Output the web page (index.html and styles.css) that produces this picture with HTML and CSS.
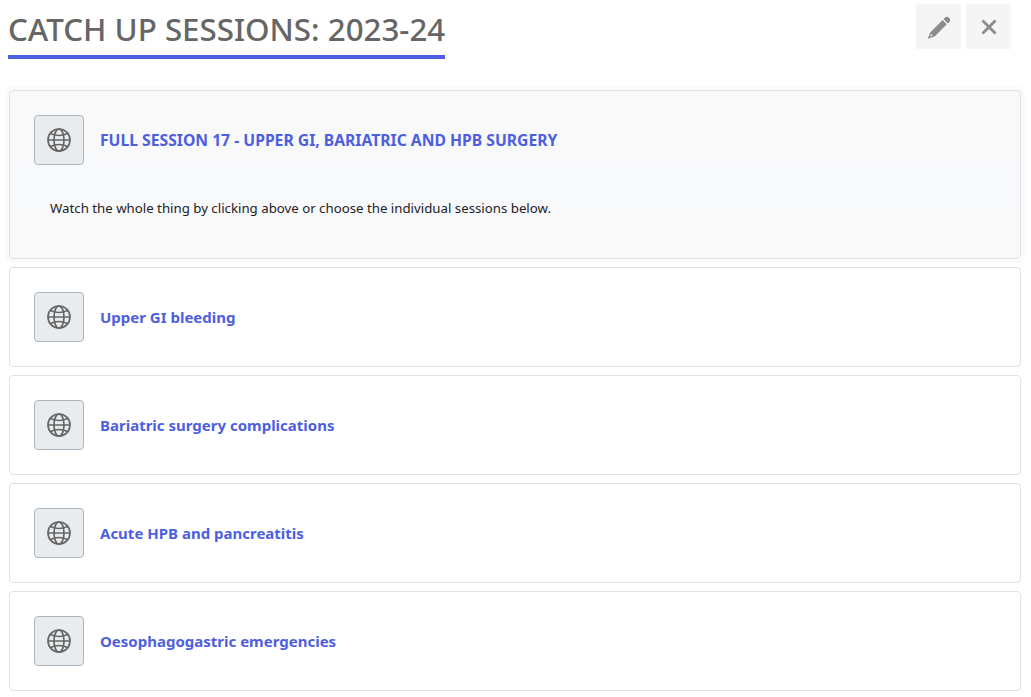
FILE: index.html
```html
<!DOCTYPE html>
<html>
<head>
    <title>Catch Up Sessions</title>
    <link rel="stylesheet" href="styles.css">
</head>
<body>
    <div class="header">
        <h2 class="page-title">CATCH UP SESSIONS: 2023-24</h2>
        <div class="actions">
            <button class="action-btn" type="button" aria-label="Edit">
                <svg width="24" height="24" viewBox="0 0 24 24"><path d="M16.600 4L17.800 2.800a3 3 0 0 1 4.200 0l.2.2a3 3 0 0 1 0 4.200L20.800 8.400zM15.600 5L19.800 9.200 7.600 21.400 1.500 23.400Q.8 23.500 1 22.800L3.200 17.400z" fill="#8c8c8c"/><path d="M3.900 18.600L6 20.700 2.900 21.800z" fill="#d8d8d8"/></svg>
            </button>
            <button class="action-btn" type="button" aria-label="Close">
                <svg width="16" height="16" viewBox="0 0 16 16"><path d="M1.500 1.500l13 13M14.500 1.500l-13 13" stroke="#8c8c8c" stroke-width="2.800" fill="none"/></svg>
            </button>
        </div>
    </div>

    <div class="list">
        <div class="card card-full">
            <div class="card-row">
                <div class="icon-box">
                    <svg width="24" height="24" viewBox="0 0 24 24" fill="none" stroke="#666" stroke-width="1.700"><circle cx="12" cy="12" r="11"/><ellipse cx="12" cy="12" rx="5" ry="11"/><path d="M3.500 5.500Q12 9.500 20.500 5.500M3.500 18.500Q12 14.500 20.500 18.500M1 12h22"/></svg>
                </div>
                <a class="card-link card-link-caps" href="#">FULL SESSION 17 - UPPER GI, BARIATRIC AND HPB SURGERY</a>
            </div>
            <p class="card-text">Watch the whole thing by clicking above or choose the individual sessions below.</p>
        </div>
        <div class="card">
            <div class="card-row">
                <div class="icon-box">
                    <svg width="24" height="24" viewBox="0 0 24 24" fill="none" stroke="#666" stroke-width="1.700"><circle cx="12" cy="12" r="11"/><ellipse cx="12" cy="12" rx="5" ry="11"/><path d="M3.500 5.500Q12 9.500 20.500 5.500M3.500 18.500Q12 14.500 20.500 18.500M1 12h22"/></svg>
                </div>
                <a class="card-link" href="#">Upper GI bleeding</a>
            </div>
        </div>
        <div class="card">
            <div class="card-row">
                <div class="icon-box">
                    <svg width="24" height="24" viewBox="0 0 24 24" fill="none" stroke="#666" stroke-width="1.700"><circle cx="12" cy="12" r="11"/><ellipse cx="12" cy="12" rx="5" ry="11"/><path d="M3.500 5.500Q12 9.500 20.500 5.500M3.500 18.500Q12 14.500 20.500 18.500M1 12h22"/></svg>
                </div>
                <a class="card-link" href="#">Bariatric surgery complications</a>
            </div>
        </div>
        <div class="card">
            <div class="card-row">
                <div class="icon-box">
                    <svg width="24" height="24" viewBox="0 0 24 24" fill="none" stroke="#666" stroke-width="1.700"><circle cx="12" cy="12" r="11"/><ellipse cx="12" cy="12" rx="5" ry="11"/><path d="M3.500 5.500Q12 9.500 20.500 5.500M3.500 18.500Q12 14.500 20.500 18.500M1 12h22"/></svg>
                </div>
                <a class="card-link" href="#">Acute HPB and pancreatitis</a>
            </div>
        </div>
        <div class="card">
            <div class="card-row">
                <div class="icon-box">
                    <svg width="24" height="24" viewBox="0 0 24 24" fill="none" stroke="#666" stroke-width="1.700"><circle cx="12" cy="12" r="11"/><ellipse cx="12" cy="12" rx="5" ry="11"/><path d="M3.500 5.500Q12 9.500 20.500 5.500M3.500 18.500Q12 14.500 20.500 18.500M1 12h22"/></svg>
                </div>
                <a class="card-link" href="#">Oesophagogastric emergencies</a>
            </div>
        </div>
    </div>
</body>
</html>
```

FILE: styles.css
```css
body { margin: 0; background: #fff; font-family: "Noto Sans", "Open Sans", sans-serif; color: #1d2125; overflow: hidden; }
.header { display: flex; justify-content: space-between; align-items: flex-start; height: 90px; padding: 4px 20px 0 8px; box-sizing: border-box; }
.page-title { margin: 0; padding: 3px 0 4px; border-bottom: 4px solid #4d5fe0; color: #666; font-size: 31.300px; line-height: 44px; font-weight: 500; }
.actions { display: flex; gap: 5px; }
.action-btn { display: flex; align-items: center; justify-content: center; width: 45px; height: 45px; padding: 0; border: none; background: #f5f5f5; }
.list { display: flex; flex-direction: column; gap: 8px; padding: 0 10px 0 9px; }
.card { padding: 24px; border: 1px solid #dee2e6; border-radius: 4px; background: #fff; }
.card-full { background: linear-gradient(#f9f9f9, #f8f9fb 60%, #f9f9f9); border-color: #e2e2e6; outline: 4px solid #fafafa; padding-bottom: 40px; }
.card-row { display: flex; align-items: center; gap: 16px; }
.icon-box { display: flex; align-items: center; justify-content: center; width: 50px; height: 50px; box-sizing: border-box; border: 1px solid #adb5bd; border-radius: 4px; background: #e9ecef; }
.card-link { color: #4d5fe0; font-size: 15px; font-weight: 700; text-decoration: none; }
.card-link-caps { font-size: 15.700px; }
.card-text { margin: 33px 0 0 16px; font-size: 13.250px; line-height: 20px; }
```
